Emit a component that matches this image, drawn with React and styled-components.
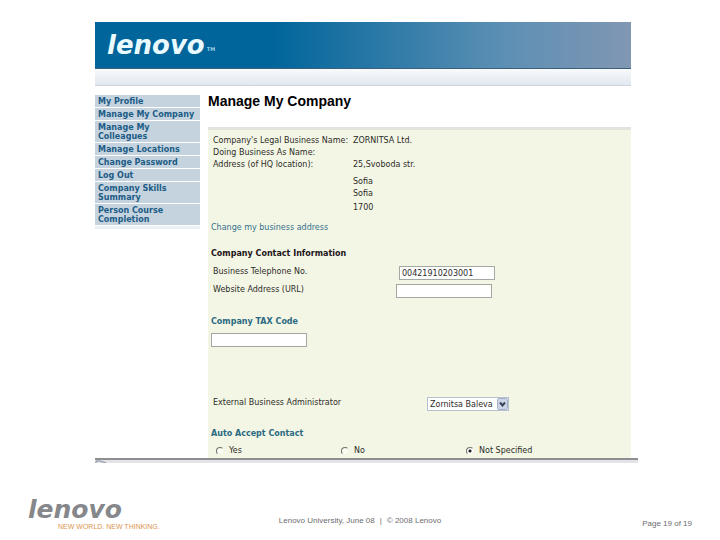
import React from 'react';
import styled, { createGlobalStyle } from 'styled-components';

const menus = [
  { id: 1, name: 'My Profile' },
  { id: 2, name: 'Manage My Company' },
  { id: 3, name: 'Manage My Colleagues' },
  { id: 4, name: 'Manage Locations' },
  { id: 5, name: 'Change Password' },
  { id: 6, name: 'Log Out' },
  { id: 7, name: 'Company Skills Summary' },
  { id: 8, name: 'Person Course Completion' },
];

const accepts = [
  { id: 'yes', name: 'Yes' },
  { id: 'no', name: 'No' },
  { id: 'none', name: 'Not Specified' },
];

const App = () => {
  return (
    <>
      <GlobalStyle />
      <Slide>
        <Screen>
          <Banner>
            <Logo>lenovo</Logo>
            <Trademark>TM</Trademark>
          </Banner>
          <SubBar />
          <Content>
            <SideMenu>
              {menus.map((menu) => (
                <a href="#" key={menu.id}>
                  {menu.name}
                </a>
              ))}
              <div className="end" />
            </SideMenu>
            <Main>
              <h1>Manage My Company</h1>
              <Form>
                <Details>
                  <dt>Company's Legal Business Name:</dt>
                  <dd>ZORNITSA Ltd.</dd>
                  <dt>Doing Business As Name:</dt>
                  <dd></dd>
                  <dt>Address (of HQ location):</dt>
                  <dd>
                    <p>25,Svoboda str.</p>
                    <p className="city">Sofia</p>
                    <p>Sofia</p>
                    <p className="zip">1700</p>
                  </dd>
                </Details>
                <AddressLink href="#">Change my business address</AddressLink>
                <Heading>Company Contact Information</Heading>
                <Field>
                  <label htmlFor="phone">Business Telephone No.</label>
                  <TextInput id="phone" defaultValue="00421910203001" />
                </Field>
                <Field $shift>
                  <label htmlFor="website">Website Address (URL)</label>
                  <TextInput id="website" />
                </Field>
                <TaxLabel htmlFor="tax">Company TAX Code</TaxLabel>
                <TextInput id="tax" />
                <AdminField>
                  <label htmlFor="admin">External Business Administrator</label>
                  <SelectBox>
                    <select id="admin">
                      <option>Zornitsa Baleva</option>
                    </select>
                    <svg width="11" height="12" viewBox="0 0 11 12">
                      <rect x="0.5" y="0.5" width="10" height="11" rx="1" fill="#cdd5e4" stroke="#a3b0cc" />
                      <path d="M3 4.500l2.500 3L8 4.500" fill="none" stroke="#39435c" strokeWidth="2" />
                    </svg>
                  </SelectBox>
                </AdminField>
                <AcceptGroup>
                  <legend>Auto Accept Contact</legend>
                  <div className="options">
                    {accepts.map((accept) => (
                      <label key={accept.id}>
                        <input type="radio" name="accept" value={accept.id} defaultChecked={accept.id === 'none'} />
                        {accept.name}
                      </label>
                    ))}
                  </div>
                </AcceptGroup>
              </Form>
            </Main>
          </Content>
          <StatusBar>
            <svg width="14" height="3" viewBox="0 0 14 3">
              <path d="M1 3V1H6L7 2H9L11 3" fill="none" stroke="#7d8da0" />
            </svg>
          </StatusBar>
        </Screen>
        <Footer>
          <Brand>
            <Logo $gray>lenovo</Logo>
            <p>NEW WORLD. NEW THINKING.</p>
          </Brand>
          <Copyright>
            <span>Lenovo University, June 08</span>
            <span>|</span>
            <span>© 2008 Lenovo</span>
          </Copyright>
          <PageNumber>Page 19 of 19</PageNumber>
        </Footer>
      </Slide>
    </>
  );
};

const GlobalStyle = createGlobalStyle`
  * {
    box-sizing: border-box;
  }
  body {
    margin: 0;
    background-color: #fff;
    color: #2c2c28;
    font-family: 'DejaVu Sans', Verdana, sans-serif;
    font-size: 8px;
    line-height: 12px;
  }
  h1, h2, p, dl, dd {
    margin: 0;
  }
  a {
    text-decoration: none;
  }
`;

const Slide = styled.div`
  display: flex;
  flex-direction: column;
  min-height: 100vh;
  padding-top: 22px;
`;

const Screen = styled.div`
  margin: 0 82px 0 95px;
`;

const Banner = styled.header`
  display: flex;
  align-items: center;
  height: 47px;
  margin-right: 7px;
  padding-left: 12px;
  border-bottom: 1px solid #3b6078;
  background: linear-gradient(90deg, #00659b 33%, #5c8fb4 76%, #8197b3);
`;

const Logo = styled.span`
  color: ${({ $gray }) => ($gray ? '#85878b' : '#e9fbff')};
  font-size: ${({ $gray }) => ($gray ? '25px' : '26px')};
  font-style: italic;
  font-weight: 700;
  line-height: 22px;
`;

const Trademark = styled.span`
  align-self: flex-end;
  padding: 0 0 13px 2px;
  color: #9bd3ea;
  font-size: 5px;
  font-weight: 700;
  line-height: 12px;
`;

const SubBar = styled.div`
  height: 17px;
  margin-right: 7px;
  border-bottom: 1px solid #cfd3da;
  background: linear-gradient(#f8fafc, #e2e8f0);
`;

const Content = styled.div`
  display: flex;
  gap: 8px;
  margin-right: 7px;
`;

const SideMenu = styled.nav`
  display: flex;
  flex: 0 0 105px;
  flex-direction: column;
  gap: 1px;
  padding-top: 9px;
  a {
    padding: 2px 3px 1px;
    background-color: #c5d3df;
    color: #1c5c86;
    font-weight: 700;
    line-height: 9px;
  }
  .end {
    height: 3px;
    background-color: #edf0f3;
  }
`;

const Main = styled.main`
  flex: 1;
  h1 {
    padding: 6px 0 17px;
    color: #000;
    font-family: 'Liberation Sans', Arial, sans-serif;
    font-size: 14px;
    line-height: 18px;
  }
`;

const Form = styled.form`
  padding: 5px 3px 0;
  border-top: 3px solid #e2e3dd;
  background-color: #f4f6e5;
`;

const Details = styled.dl`
  display: grid;
  grid-template-columns: 140px 1fr;
  padding-left: 2px;
  .city {
    padding-top: 5px;
  }
  .zip {
    padding-top: 2px;
  }
`;

const AddressLink = styled.a`
  display: block;
  padding-top: 8px;
  color: #33708c;
`;

const Heading = styled.h2`
  padding: 14px 0 6px;
  color: #1c1418;
  font-size: 8px;
`;

const Field = styled.div`
  display: flex;
  justify-content: space-between;
  height: 18px;
  padding-left: 2px;
  margin-right: ${({ $shift }) => ($shift ? '136px' : '133px')};
`;

const TextInput = styled.input`
  display: block;
  width: 96px;
  height: 14px;
  padding: 0 2px;
  border: 1px solid #a2a8a2;
  background-color: #fff;
  color: #2c2c28;
  font-family: inherit;
  font-size: 8px;
`;

const TaxLabel = styled.label`
  display: block;
  padding: 14px 0 5px;
  color: #2a6a82;
  font-weight: 700;
`;

const AdminField = styled.div`
  display: flex;
  justify-content: space-between;
  margin-right: 119px;
  padding: 50px 0 17px 2px;
`;

const SelectBox = styled.div`
  display: flex;
  align-items: center;
  width: 82px;
  height: 14px;
  border: 1px solid #b5c1cd;
  background-color: #fff;
  select {
    flex: 1;
    min-width: 0;
    padding: 0 0 0 2px;
    border: 0;
    appearance: none;
    background: none;
    color: #2c2c28;
    font-family: inherit;
    font-size: 8px;
  }
`;

const AcceptGroup = styled.fieldset`
  margin: 0;
  padding: 0;
  border: 0;
  legend {
    padding: 0;
    color: #2a6a82;
    font-weight: 700;
  }
  .options {
    display: grid;
    grid-template-columns: 125px 125px 1fr;
    padding: 5px 0 1px 5px;
  }
  label {
    display: flex;
    align-items: center;
    gap: 5px;
  }
  input {
    width: 8px;
    height: 8px;
    margin: 0;
    border: 1px solid;
    border-color: #6f736c #f4f6e5 #f4f6e5 #6f736c;
    border-radius: 50%;
    appearance: none;
    background-color: #fafbf2;
  }
  input:checked {
    background: radial-gradient(circle, #222 0 1px, #fff 2px);
  }
`;

const StatusBar = styled.div`
  height: 5px;
  border-top: 2px solid #8d8e92;
  background-color: #e3e3e8;
  svg {
    display: block;
  }
`;

const Footer = styled.footer`
  display: grid;
  flex: 1;
  grid-template-columns: 1fr auto 1fr;
  padding: 36px 28px 0;
  color: #6c6d70;
  font-family: 'Liberation Sans', Arial, sans-serif;
`;

const Brand = styled.div`
  ${Logo} {
    display: block;
    font-family: 'DejaVu Sans', Verdana, sans-serif;
  }
  p {
    padding-left: 30px;
    color: #dc9550;
    font-size: 7px;
    line-height: 12px;
  }
`;

const Copyright = styled.div`
  display: flex;
  gap: 5px;
  padding-top: 16px;
`;

const PageNumber = styled.div`
  padding-top: 19px;
  text-align: right;
`;

export default App;
